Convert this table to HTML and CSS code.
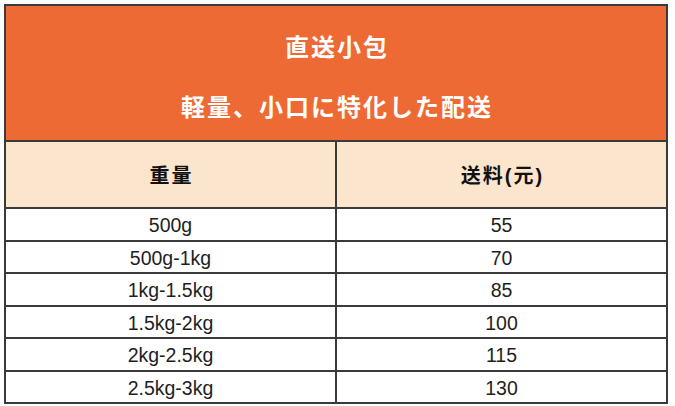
FILE: index.html
```html
<!DOCTYPE html>
<html lang="ja">
<head>
<meta charset="utf-8">
<title>直送小包</title>
<link rel="stylesheet" href="styles.css">
</head>
<body>
<table class="rates">
  <thead>
    <tr class="title-row">
      <th colspan="2" class="title-cell">
        <div class="title-box">
          <p class="title-line">直送小包</p>
          <p class="title-line">軽量、小口に特化した配送</p>
        </div>
      </th>
    </tr>
    <tr class="head-row">
      <th class="head-cell"><span class="head-text">重量</span></th>
      <th class="head-cell"><span class="head-text">送料(元)</span></th>
    </tr>
  </thead>
  <tbody>
    <tr class="data-row"><td>500g</td><td>55</td></tr>
    <tr class="data-row"><td>500g-1kg</td><td>70</td></tr>
    <tr class="data-row"><td>1kg-1.5kg</td><td>85</td></tr>
    <tr class="data-row"><td>1.5kg-2kg</td><td>100</td></tr>
    <tr class="data-row"><td>2kg-2.5kg</td><td>115</td></tr>
    <tr class="data-row"><td>2.5kg-3kg</td><td>130</td></tr>
  </tbody>
</table>
</body>
</html>
```
FILE: styles.css
```css
html, body {
  margin: 0;
  padding: 0;
  background: #ffffff;
}
body {
  padding: 4px;
  font-family: "Liberation Sans", "Noto Sans CJK JP", sans-serif;
}
.rates {
  width: 664px;
  border-collapse: collapse;
  table-layout: fixed;
}
.rates th,
.rates td {
  border: 2px solid #3a3a3a;
  padding: 0;
  text-align: center;
}
.title-row {
  height: 136px;
}
.title-cell {
  background: #ee6a35;
  color: #ffffff;
  vertical-align: middle;
}
.title-box {
  display: flex;
  flex-direction: column;
  align-items: center;
  gap: 30px;
  padding-top: 6px;
}
.title-line {
  margin: 0 -2px 0 0;
  font-family: "Noto Sans CJK JP", sans-serif;
  font-size: 24px;
  font-weight: 700;
  line-height: 30px;
  letter-spacing: 2px;
}
.head-row {
  height: 67px;
}
.head-cell {
  background: #fce5cd;
  color: #111111;
  font-family: "Liberation Sans", "Noto Sans CJK JP", sans-serif;
  font-size: 20px;
  font-weight: 700;
}
.head-text {
  letter-spacing: 2px;
  margin-right: -2px;
}
.data-row {
  height: 32.5px;
}
.data-row td {
  color: #1e1e1e;
  font-size: 19.5px;
  line-height: 24px;
  padding-top: 2px;
}
```
